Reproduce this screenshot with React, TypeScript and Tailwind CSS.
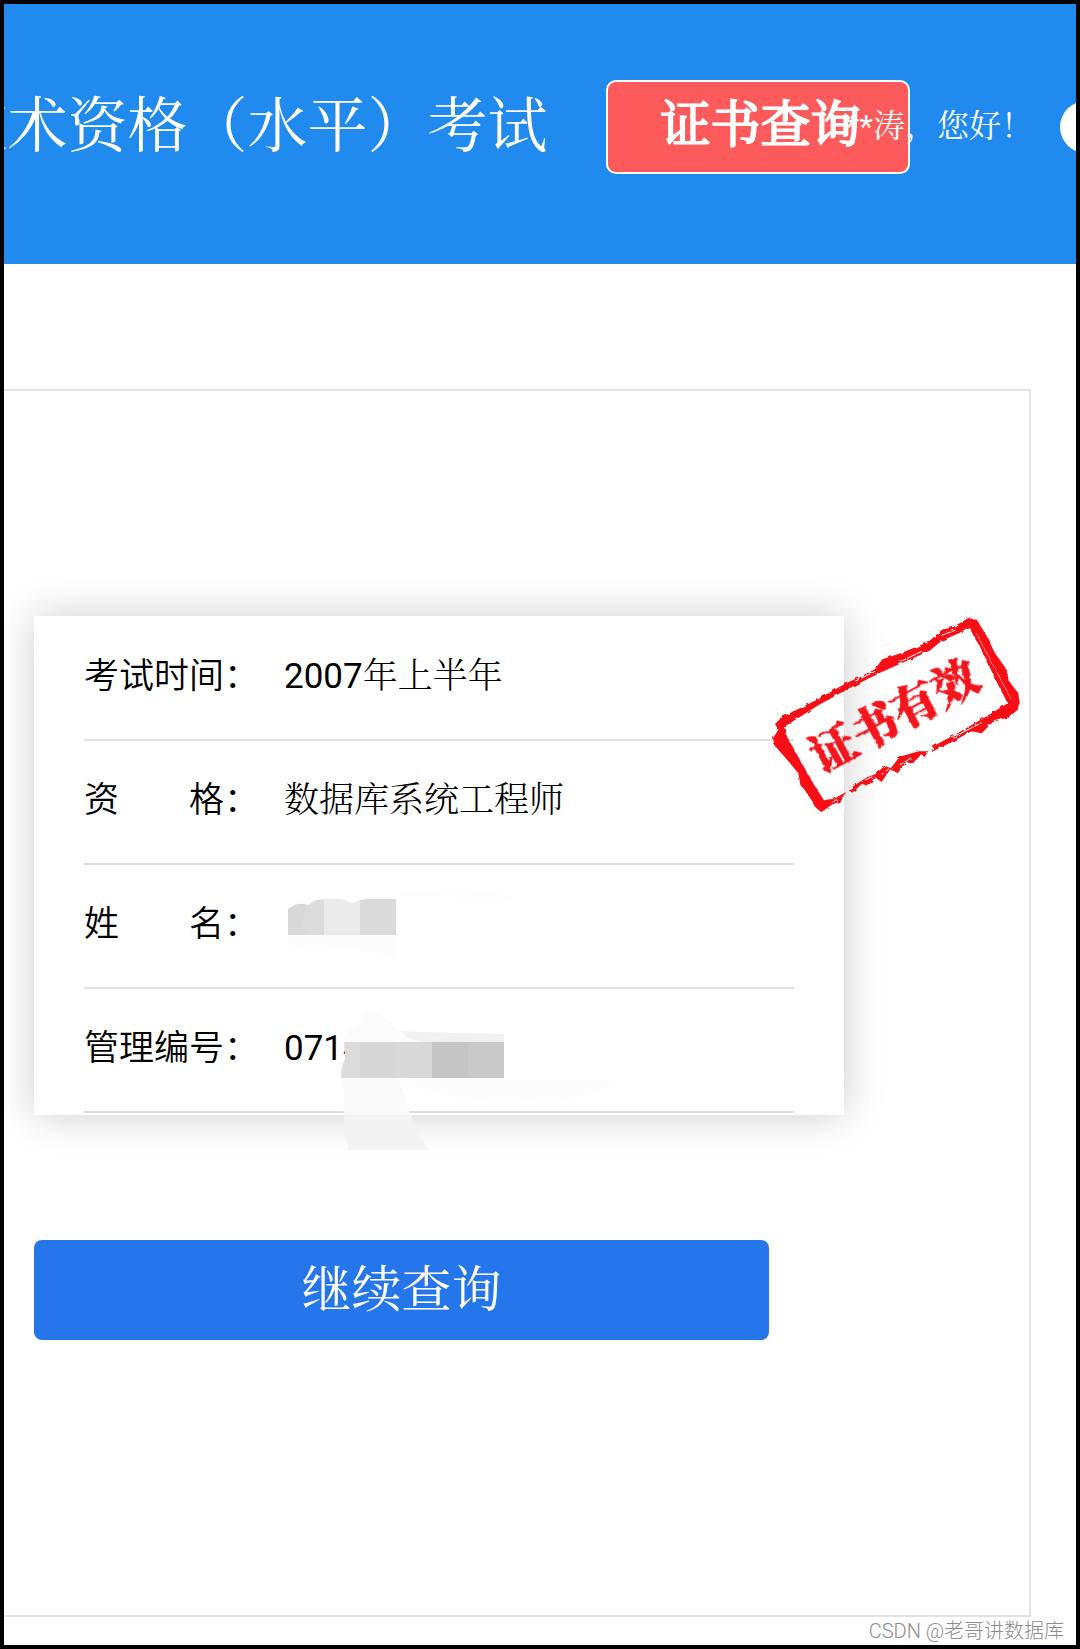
import type { ReactNode } from 'react';

interface FieldProps {
  label: string;
  children: ReactNode;
}

const SERIF = "font-[Roboto,'Noto_Serif_CJK_SC','Noto_Sans_CJK_SC',serif]";

function Field({ label, children }: FieldProps) {
  return (
    <div className="flex h-[124px] items-center border-b-2 border-[#dedede] pb-2.5 text-[35px] leading-[52px] font-[350] text-black">
      <dt className="flex w-[200px] shrink-0 font-['Noto_Sans_CJK_SC',sans-serif]">
        <span className="flex w-[140px] justify-between">
          {label.split('').map((char) => (
            <span key={char}>{char}</span>
          ))}
        </span>
        ：
      </dt>
      <dd className="relative pt-2">{children}</dd>
    </div>
  );
}

function NameMask() {
  return (
    <svg className="block h-[62px] w-[236px] overflow-visible" viewBox="0 3 236 62" aria-label="已隐藏" role="img">
      <path d="M112 4 Q150 -2 200 0 Q222 2 228 8 Z" fill="#fcfcfc" />
      <path d="M4 44 H112 V70 Q90 58 60 60 Q20 60 4 54 Z" fill="#fcfcfc" />
      <path d="M4 18 Q14 10 24 14 V44 H4 Z" fill="#d8d8d8" />
      <path d="M24 14 Q31 8 40 8 V44 H24 Q14 30 24 14 Z" fill="#dcdcdc" />
      <path d="M40 8 H56 Q63 9 68 12 L76 9 V44 H40 Z" fill="#ebebeb" />
      <path d="M76 9 Q80 8 86 8 H112 V44 H76 Z" fill="#dadada" />
    </svg>
  );
}

function NumberMask() {
  return (
    <svg
      className="absolute -top-1 left-14 h-[170px] w-[280px]"
      viewBox="0 0 280 170"
      aria-hidden="true"
    >
      <path d="M60 20 Q110 22 164 23 V32 H60 Z" fill="#f1f1f1" />
      <path d="M4 32 Q5 18 18 13 Q22 2 33 2 Q46 2 54 16 Q62 20 68 27 L86 32 Z" fill="#fbfbfb" />
      <path d="M62 68 H280 Q240 92 190 92 Q120 92 62 72 Z" fill="#fcfcfc" />
      <path d="M3 67 H60 L70 104 H4 Z" fill="#fafafa" />
      <path d="M4 104 H71 Q76 122 88 139 H9 Q4 122 4 104 Z" fill="#f3f3f3" />
      <path d="M4 31 H20 V67 H1 Q1 54 5 48 Z" fill="#dcdcdc" />
      <path d="M20 31 H56 V67 H20 Z" fill="#d7d7d7" />
      <path d="M56 31 H92 V67 H56 Z" fill="#d9d9d9" />
      <path d="M92 31 H128 V67 H92 Z" fill="#c5c5c5" />
      <path d="M128 31 H164 V67 H128 Z" fill="#c9c9c9" />
    </svg>
  );
}

function ValidStamp() {
  return (
    <svg
      className="absolute -top-1.5 left-[731px] h-[210px] w-[260px]"
      viewBox="0 0 780 630"
      role="img"
      aria-label="证书有效"
    >
      <defs>
        <filter id="rough" x="-5%" y="-5%" width="110%" height="110%">
          <feTurbulence type="fractalNoise" baseFrequency="0.06" numOctaves="3" seed="4" />
          <feDisplacementMap in="SourceGraphic" scale="10" />
        </filter>
      </defs>
      <g fill="#fb0d14" filter="url(#rough)">
        {/* top edge */}
        <path d="M30 342 L52 320 L150 272 L235 224 L330 178 L352 148 L400 132 L440 116 L490 96 L530 60 L566 50 L614 22 L634 34 L622 44 L585 68 L530 92 L494 122 L440 146 L350 186 L250 236 L160 286 L62 348 L44 366 Z" />
        {/* right edge */}
        <path d="M604 34 L634 28 L664 76 L690 130 L720 172 L734 216 L760 250 L764 282 L736 296 L726 276 L690 206 L656 132 Z" />
        <path d="M634 70 L738 268" stroke="#ff8080" strokeWidth="3" />
        {/* bottom edge */}
        <path d="M764 270 L758 300 L730 322 L684 336 L650 370 L620 364 L560 396 L500 426 L506 408 L580 368 L660 322 L724 282 Z" />
        <path d="M490 424 L478 442 L470 432 L442 462 L424 456 L398 490 L376 478 L350 516 L330 502 L308 530 L290 522 L262 548 L250 540 L278 520 L306 502 L332 492 L358 468 L378 474 L404 440 L440 430 L462 424 Z" />
        <path d="M244 546 L222 576 L200 584 L170 606 L158 586 L180 570 L206 566 Z" />
        {/* left edge */}
        <path d="M24 384 L32 372 L44 352 L62 356 L66 380 L104 448 L148 526 L188 588 L168 606 L150 590 L128 552 L106 524 L100 490 L62 444 L28 406 Z" />
        {/* worn spots in the ink */}
        <g stroke="#ffffff" strokeWidth="3" fill="none">
          <path d="M270 214 L330 184 M290 196 L318 182 M400 158 L470 124 M530 76 L572 60" />
          <path d="M560 384 L650 338 M300 510 L322 500 M350 494 L372 476 M404 466 L438 444 M200 578 L216 568" />
        </g>
      </g>
      <g
        fill="#f5121a"
        stroke="#f5121a"
        strokeWidth="2"
        filter="url(#rough)"
        fontFamily="'Noto Serif CJK SC', 'Noto Sans CJK SC', serif"
        fontSize="138"
        fontWeight="900"
        transform="rotate(-28.5 395 320)"
      >
        <text x="391" y="364" textAnchor="middle">
          证书有效
        </text>
      </g>
    </svg>
  );
}

export default function App() {
  return (
    <div className={`flex min-h-screen flex-col border-4 border-black bg-white ${SERIF}`}>
      <header className="flex h-[260px] items-start overflow-hidden bg-[#218aee] pt-[76px] text-white">
        <h1 className="flex min-w-0 flex-1 justify-end overflow-hidden text-[60px] leading-[94px] whitespace-nowrap">
          技术资格（水平）考试
        </h1>
        <a
          href="#query"
          className="ml-[59px] h-[94px] w-[304px] shrink-0 rounded-[10px] border-2 border-white bg-[#fd5a5b] pl-[52px] text-[50px] leading-[86px] [-webkit-text-stroke:2px_white]"
        >
          证书查询
        </a>
        <p className="-ml-[65px] shrink-0 text-[32px] leading-[92px] whitespace-nowrap">**涛，您好！</p>
        <div className="ml-[27px] flex h-[94px] w-4 shrink-0 items-center">
          <span className="size-[52px] shrink-0 rounded-full bg-white" />
        </div>
      </header>

      <main className="mt-[125px] mr-[45px] grow border-y-2 border-r-2 border-[#e3e3e3] pt-[225px] pb-[272px] pl-[30px]">
        <section className="relative w-full max-w-[810px] bg-white px-[50px] pt-px pb-[2px] shadow-[0_0_40px_rgba(0,0,0,0.2)]">
          <dl>
            <Field label="考试时间">
              <span className="font-normal">2007</span>年上半年
            </Field>
            <Field label="资格">数据库系统工程师</Field>
            <Field label="姓名">
              <NameMask />
            </Field>
            <Field label="管理编号">
              <span className="font-normal">0714</span>
              <NumberMask />
            </Field>
          </dl>
          <ValidStamp />
        </section>
        <button
          type="button"
          className="mt-[125px] block h-[100px] w-full max-w-[735px] rounded-lg bg-[#2575eb] pb-px text-[50px] leading-[72px] text-white"
        >
          继续查询
        </button>
      </main>

      <footer className="flex h-7 items-center justify-end pr-3 font-[Roboto,'Noto_Sans_CJK_SC',sans-serif] text-[20px] leading-7 font-light text-[#8c8c8c]">
        CSDN @老哥讲数据库
      </footer>
    </div>
  );
}
